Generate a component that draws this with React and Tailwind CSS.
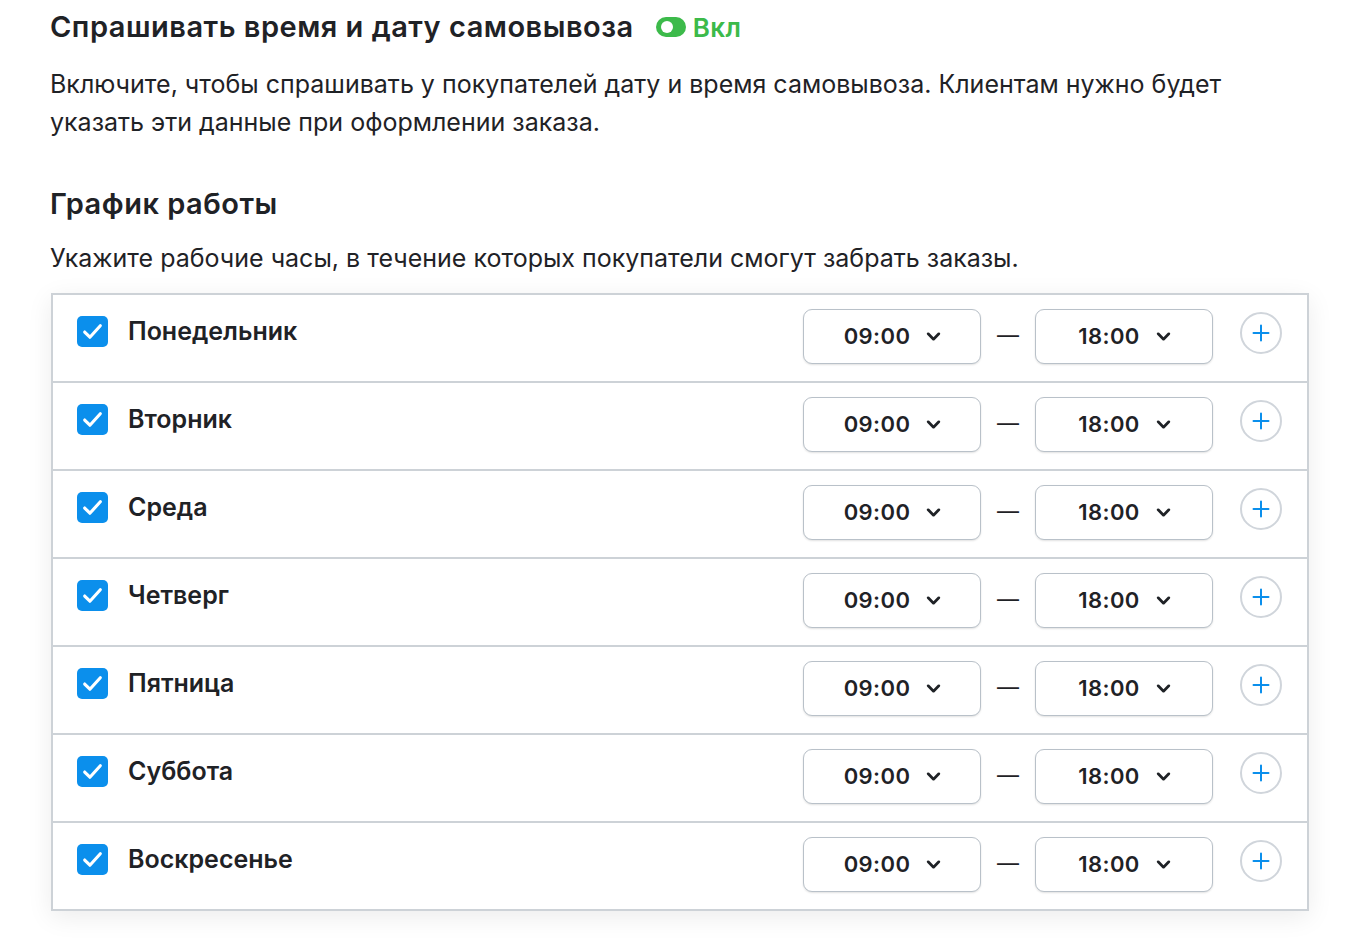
import { useState } from 'react';

const DAYS = ['Понедельник', 'Вторник', 'Среда', 'Четверг', 'Пятница', 'Суббота', 'Воскресенье'];

function Chevron() {
  return (
    <svg width="17" height="17" viewBox="0 0 16 16" fill="none">
      <path d="M3 5.5l5 5 5-5" stroke="#1f2226" strokeWidth="2.6" strokeLinecap="round" strokeLinejoin="round" />
    </svg>
  );
}

function TimeSelect({ value }) {
  return (
    <button className="flex h-[55px] w-[178px] items-center justify-center gap-[15px] rounded-[9px] border border-[#b9c1c9] bg-white pl-[2px] shadow-[0_1px_2px_rgba(0,0,0,0.12)]">
      <span className="text-[22px] font-semibold tracking-[0.4px] text-[#1f2226]">{value}</span>
      <Chevron />
    </button>
  );
}

function DayRow({ name, last }) {
  const [checked, setChecked] = useState(true);
  return (
    <div className={`flex items-start pl-[24px] pr-[25px] ${last ? 'h-[86px]' : 'h-[88px] border-b-2 border-[#cdd2d7]'}`}>
      <div className="flex flex-1 items-center gap-[20px] pt-[21px]">
        <button
          onClick={() => setChecked(!checked)}
          className={`flex h-[31px] w-[31px] items-center justify-center rounded-[5px] ${checked ? 'bg-[#0b8fec]' : 'border-2 border-[#b9c1c9] bg-white'}`}
        >
          {checked && (
            <svg width="25" height="25" viewBox="0 0 24 24" fill="none">
              <path d="M4.5 12.5l5 5L19.5 6.5" stroke="white" strokeWidth="3" strokeLinecap="round" strokeLinejoin="round" />
            </svg>
          )}
        </button>
        <span className="text-[25px] font-semibold leading-[31px] text-[#1f2226]">{name}</span>
      </div>
      <div className="flex items-center pt-[14px]">
        <TimeSelect value="09:00" />
        <span className="mx-[16px] mb-[2px] text-[22px] text-[#1f2226]">—</span>
        <TimeSelect value="18:00" />
      </div>
      <div className="ml-[27px] pt-[17px]">
        <button className="flex h-[42px] w-[42px] items-center justify-center rounded-full border-2 border-[#d0d5db] bg-white">
          <svg width="18" height="18" viewBox="0 0 18 18" fill="none">
            <path d="M9 1.5v15M1.5 9h15" stroke="#0b8fec" strokeWidth="2" strokeLinecap="round" />
          </svg>
        </button>
      </div>
    </div>
  );
}

export default function App() {
  return (
    <div className="min-h-[942px] bg-white pl-[50px] pt-[10px] font-['Inter','Noto_Sans',sans-serif] text-[#1f2226]">
      <div className="flex h-[34px] items-center">
        <h1 className="text-[29px] font-semibold leading-[34px] tracking-[0.5px]">Спрашивать время и дату самовывоза</h1>
        <div className="ml-[22px] flex items-center gap-[7px]">
          <div className="relative h-[20px] w-[30px] rounded-full bg-[#3cba4a]">
            <div className="absolute left-[5px] top-[4px] h-[12px] w-[12px] rounded-full bg-white" />
          </div>
          <span className="text-[26px] font-semibold tracking-[0.5px] text-[#3cba4a]">Вкл</span>
        </div>
      </div>

      <p className="mt-[21px] w-[1200px] text-[25px] leading-[38px]">
        Включите, чтобы спрашивать у покупателей дату и время самовывоза. Клиентам нужно будет указать эти данные при оформлении заказа.
      </p>

      <h2 className="mt-[46px] text-[29px] font-semibold leading-[34px] tracking-[0.5px]">График работы</h2>

      <p className="mt-[18px] text-[25px] leading-[38px]">
        Укажите рабочие часы, в течение которых покупатели смогут забрать заказы.
      </p>

      <div className="ml-[1px] mt-[16px] w-[1258px] border-2 border-[#cdd2d7] bg-white shadow-[0_6px_24px_rgba(0,0,0,0.08)]">
        {DAYS.map((d, i) => (
          <DayRow key={d} name={d} last={i === DAYS.length - 1} />
        ))}
      </div>
    </div>
  );
}
